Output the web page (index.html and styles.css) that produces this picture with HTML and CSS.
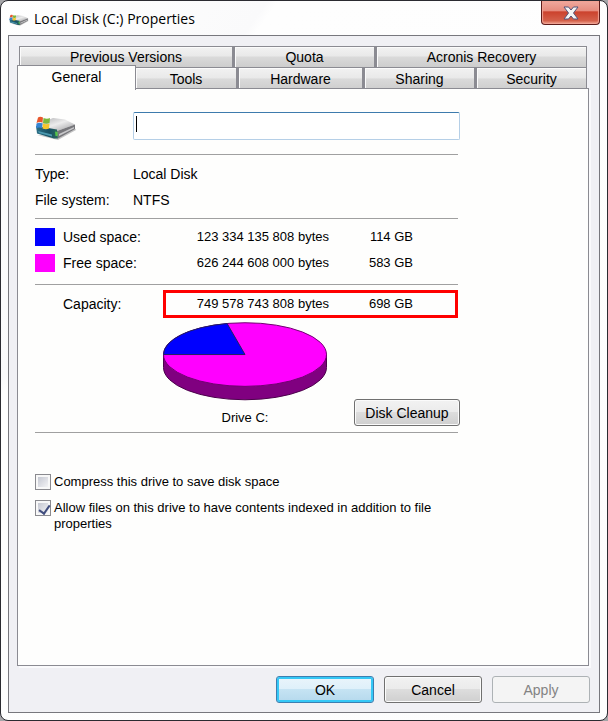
FILE: index.html
```html
<!DOCTYPE html>
<html lang="en">
  <head>
    <meta charset="UTF-8">
    <meta name="viewport" content="width=device-width, initial-scale=1">
    <title>Local Disk (C:) Properties</title>
    <link rel="stylesheet" href="styles.css">
  </head>
  <body>
    <svg class="sprite" aria-hidden="true">
      <defs>
        <linearGradient id="metal" x1="0" y1="0" x2="1" y2="1">
          <stop offset="0" stop-color="#a9a9ac"/>
          <stop offset=".5" stop-color="#ececec"/>
          <stop offset="1" stop-color="#9b9b9e"/>
        </linearGradient>
        <linearGradient id="front" x1="0" y1="0" x2="1" y2="0">
          <stop offset="0" stop-color="#2d6f86"/>
          <stop offset=".6" stop-color="#174f62"/>
          <stop offset="1" stop-color="#2b6a5e"/>
        </linearGradient>
      </defs>
      <symbol id="drive" viewBox="0 0 42 24">
        <path d="M2 19 23 24 41 14 39 11 22 20z" fill="#c4c4c4"/>
        <path d="M1 9 18 2 30 3.500 40 8.500 22 15z" fill="url(#metal)"/>
        <path d="M22 15 40 8.500 40 13 23 22.500z" fill="#77777b"/>
        <path d="M24 18 39 11 39 12.500 24 20z" fill="#c8c8ca"/>
        <path d="M1 10 22 13.500 23 22.500 19 22.500 2 17.500z" fill="url(#front)"/>
        <path d="M3 15 17 18.500 17 20.500 4 17z" fill="#4c9ab0"/>
        <path d="M20 15.500 22.500 16 22.500 20 20.500 20z" fill="#55c545"/>
        <path d="M3 1.500Q5 0 8 1.500L7.500 6.500Q4.500 5.500 1.500 7z" fill="#e8572c"/>
        <path d="M8.500 2Q12 3.500 15 2L14.500 7Q11.500 8.500 8 7z" fill="#7cb83c"/>
        <path d="M1.500 7.500Q4.500 6 7.500 7.500L7 12Q4 11 1 12z" fill="#3685d1"/>
        <path d="M8 7.500Q11.500 9 14.500 7.500L14 12.500Q11 14 7.500 12.500z" fill="#f8c52c"/>
      </symbol>
    </svg>

    <div class="window">
      <header class="titlebar">
        <svg class="titlebar__icon" aria-hidden="true"><use href="#drive"/></svg>
        <h1 class="titlebar__text">Local Disk (C:) Properties</h1>
        <button class="close" type="button" aria-label="Close">
          <svg width="16" height="14" viewBox="0 0 16 14" aria-hidden="true">
            <path d="M1 1H5.500L8 4 10.500 1H15L10.500 7 15 13H10.500L8 10 5.500 13H1L5.500 7z" fill="#f4f4f4" stroke="#515379"/>
          </svg>
        </button>
      </header>

      <form class="client">
        <div class="tabs" role="tablist">
          <div class="tabs__row tabs__row--back">
            <button class="tab" type="button" role="tab">Previous Versions</button>
            <button class="tab" type="button" role="tab">Quota</button>
            <button class="tab" type="button" role="tab">Acronis Recovery</button>
          </div>
          <div class="tabs__row tabs__row--front">
            <button class="tab tab--active" type="button" role="tab" aria-selected="true">General</button>
            <button class="tab" type="button" role="tab">Tools</button>
            <button class="tab" type="button" role="tab">Hardware</button>
            <button class="tab" type="button" role="tab">Sharing</button>
            <button class="tab" type="button" role="tab">Security</button>
          </div>
        </div>

        <main class="panel" role="tabpanel">
          <div class="general">
            <div class="volume">
              <svg class="volume__icon" aria-hidden="true"><use href="#drive"/></svg>
              <input class="volume__name" type="text" name="label" aria-label="Volume label">
            </div>
            <hr>
            <table class="info">
              <tr><th scope="row">Type:</th><td>Local Disk</td></tr>
              <tr><th scope="row">File system:</th><td>NTFS</td></tr>
            </table>
            <hr>
            <table class="space">
              <tr>
                <td class="space__key"><span class="swatch swatch--used"></span></td>
                <th scope="row">Used space:</th>
                <td class="space__bytes">123 334 135 808 bytes</td>
                <td class="space__size">114 GB</td>
              </tr>
              <tr>
                <td class="space__key"><span class="swatch swatch--free"></span></td>
                <th scope="row">Free space:</th>
                <td class="space__bytes">626 244 608 000 bytes</td>
                <td class="space__size">583 GB</td>
              </tr>
            </table>
            <hr>
            <table class="space space--total">
              <tr>
                <td class="space__key"></td>
                <th scope="row">Capacity:</th>
                <td class="space__bytes">749 578 743 808 bytes</td>
                <td class="space__size">698 GB</td>
              </tr>
            </table>
            <div class="usage">
              <figure class="chart">
                <svg width="164" height="79" viewBox="0 0 165 79" role="img" aria-label="Used and free space">
                  <path d="M.5 32.500V45.500A82 32.500 0 0 0 164.500 45.500V32.500z" fill="#800080" stroke="#4b004b"/>
                  <ellipse cx="82.500" cy="32.500" rx="82" ry="32" fill="#f0f" stroke="#700070"/>
                  <path d="M82.500 32.500H.5A82 32 0 0 1 64.500 1.300z" fill="#00f" stroke="#202060"/>
                </svg>
                <figcaption>Drive C:</figcaption>
              </figure>
              <button class="button button--cleanup" type="button">Disk Cleanup</button>
            </div>
            <hr>
            <div class="options">
              <label class="option">
                <input type="checkbox" name="compress">
                <span>Compress this drive to save disk space</span>
              </label>
              <label class="option">
                <input type="checkbox" name="index" checked>
                <span>Allow files on this drive to have contents indexed in addition to file properties</span>
              </label>
            </div>
          </div>
        </main>

        <footer class="actions">
          <button class="button button--default" type="submit">OK</button>
          <button class="button" type="button">Cancel</button>
          <button class="button" type="button" disabled>Apply</button>
        </footer>
      </form>
    </div>
  </body>
</html>
```

FILE: styles.css
```css
* {
  box-sizing: border-box;
}
body {
  margin: 0;
  background: #a5a5a8;
  color: #000;
  font: 14px/16px "Liberation Sans", Arial, sans-serif;
}
button, input {
  font: inherit;
  color: inherit;
}
.sprite {
  position: absolute;
  width: 0;
  height: 0;
}

.window {
  display: flex;
  flex-direction: column;
  min-height: 100vh;
  padding: 0 7px 7px;
  border: 1px solid #2b2b31;
  border-radius: 8px;
  background: linear-gradient(125deg, #fff 0, #fafafb 24%, #fefefe 25%, #fdfdfd 100%);
}

/* Title bar */
.titlebar {
  display: flex;
  height: 34px;
}
.titlebar__icon {
  width: 20px;
  height: 12px;
  margin: 13px 5px 0 1px;
}
.titlebar__text {
  flex: 1;
  margin: 0;
  font: 14px/35px "Open Sans", "Segoe UI", sans-serif;
}
.close {
  display: flex;
  align-items: center;
  justify-content: center;
  width: 59px;
  height: 24px;
  padding: 0;
  border: 1px solid #5e1c1a;
  border-top: 0;
  border-radius: 0 0 4px 4px;
  background: linear-gradient(#f0a99e, #e68a7c 45%, #cb412c 46%, #d4604a 85%, #efa08c);
  box-shadow: inset 0 0 1px 1px #f0a294;
}

.client {
  display: flex;
  flex: 1;
  flex-direction: column;
  padding: 10px 9px 9px 8px;
  border: 1px solid #77777d;
  background: #f0f0f4;
}

/* Tabs */
.tabs {
  margin: 0 3px 0 2px;
}
.tabs__row {
  display: grid;
  height: 21px;
}
.tabs__row--back {
  grid-template-columns: 214fr 142fr 212fr;
}
.tabs__row--front {
  grid-template-columns: 117fr 101fr 126fr 112fr 112fr;
}
.tab {
  padding: 0;
  border: 1px solid #8b8b92;
  border-bottom: 0;
  background: linear-gradient(#f2f2f2, #e9e9e9 45%, #dadada 50%, #cdcdcd);
  box-shadow: inset 1px 1px #fbfbfb;
}
.tab + .tab {
  border-left-width: 2px;
}
.tab--active {
  height: 25px;
  margin: -2px 0 0 -2px;
  padding-bottom: 3px;
  background: #fefefd;
  box-shadow: none;
  z-index: 1;
}
.tab--active + .tab {
  border-left-width: 0;
}

.panel {
  flex: 1;
  margin-right: 1px;
  padding: 23px 17px;
  border: 1px solid #8b8b92;
  background: #fefefd;
  box-shadow: 2px 2px #fafafc;
}
.general {
  max-width: 425px;
}
hr {
  height: 1px;
  margin: 0 2px 0 0;
  border: 0;
  background: #a0a0a0;
}
table {
  width: 100%;
  border-spacing: 0;
  table-layout: fixed;
}
th, td {
  padding: 0;
  font-weight: 400;
  text-align: left;
}

.volume {
  display: flex;
  align-items: center;
  margin-bottom: 14px;
}
.volume__icon {
  width: 42px;
  height: 24px;
  margin: 4px 56px 0 0;
}
/* the first gradient is the text cursor */
.volume__name {
  flex: 1;
  min-width: 0;
  height: 28px;
  padding: 2px;
  border: 1px solid #b5cfe7;
  border-top-color: #3d7bad;
  border-radius: 2px;
  outline: 0;
  background: linear-gradient(#000, #000) 2px 3px / 1px 16px no-repeat, #fff;
}

.info {
  margin: 6px 0 5px;
}
.info tr, .space tr {
  height: 26px;
}
.info th {
  width: 98px;
}

/* Used, free and total space */
.space {
  width: calc(100% - 2px);
  margin: 5px 0 8px;
}
.space__key {
  width: 28px;
}
.space th {
  width: 100px;
}
.space__bytes {
  width: 166px;
  font-size: 13px;
  text-align: right;
}
.space__size {
  padding-right: 45px;
  font-size: 13px;
  text-align: right;
}
.space--total {
  margin-bottom: 4px;
}
.space--total tr {
  height: 28px;
}
.space--total .space__bytes {
  border: solid #f00;
  border-width: 3px 0 3px 3px;
}
.space--total .space__size {
  padding-right: 42px;
  border: solid #f00;
  border-width: 3px 3px 3px 0;
}
.swatch {
  display: block;
  width: 20px;
  height: 18px;
}
.swatch--used {
  background: #00f;
}
.swatch--free {
  background: #f0f;
}

.usage {
  display: flex;
  align-items: flex-end;
  justify-content: space-between;
  height: 110px;
}
.chart {
  height: 110px;
  margin: 0 0 0 128px;
  font-size: 13px;
  text-align: center;
}
.chart svg {
  display: block;
  margin-bottom: 9px;
}

.options {
  display: grid;
  gap: 10px;
  margin-top: 41px;
  font-size: 13px;
}
.option {
  display: flex;
  align-items: flex-start;
  gap: 3px;
}
.option input {
  display: grid;
  flex: none;
  width: 16px;
  height: 16px;
  margin: 0;
  padding: 2px;
  border: 1px solid #8a8a8f;
  background: linear-gradient(135deg, #c5c8d2, #f3f3f5) content-box, #f8f8f8;
  appearance: none;
}
.option input:checked::after {
  content: "";
  width: 5px;
  height: 9px;
  margin: 0 0 0 3px;
  border: solid #404d7e;
  border-width: 0 2px 2px 0;
  transform: rotate(35deg);
}

/* Buttons */
.button {
  width: 98px;
  height: 27px;
  padding: 0;
  border: 1px solid #707070;
  border-radius: 3px;
  background: linear-gradient(#f2f2f2, #ebebeb 48%, #dddddd 50%, #cfcfcf);
  box-shadow: inset 0 0 0 1px #fbfbfb;
}
.button--cleanup {
  width: 106px;
  margin-bottom: 6px;
}
.button--default {
  border-color: #3c7fb1;
  background: linear-gradient(#eaf5fb, #def0fa 48%, #c5e3f3 50%, #b5d9ed);
  box-shadow: inset 0 0 0 2px #35c8f6;
}
.button:disabled {
  border-color: #adb2b5;
  background: #f4f4f4;
  box-shadow: none;
  color: #838383;
}
.actions {
  display: flex;
  justify-content: flex-end;
  gap: 10px;
  margin-top: 10px;
}
```
